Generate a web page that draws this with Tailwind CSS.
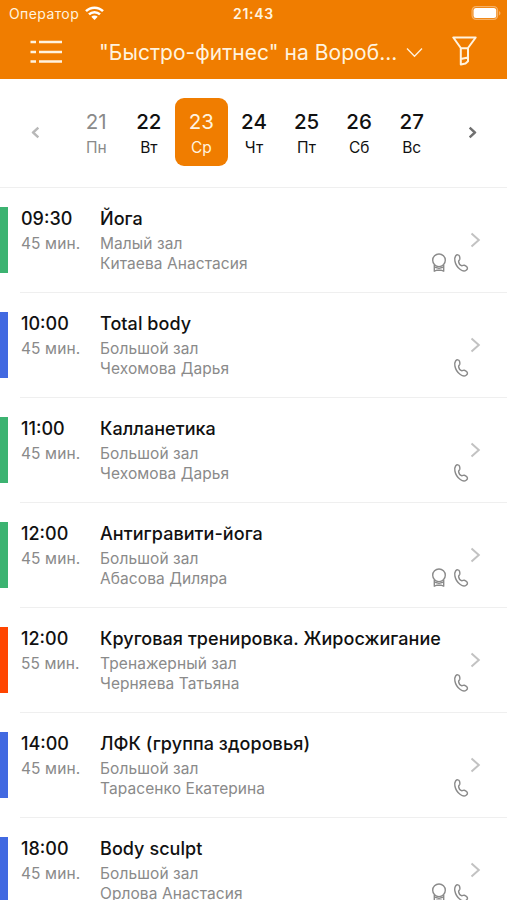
<!DOCTYPE html>
<html lang="ru">
<head>
<meta charset="utf-8">
<title>Расписание</title>
<script src="https://cdn.jsdelivr.net/npm/@tailwindcss/browser@4"></script>
</head>
<body class="bg-white">
<svg class="hidden">
  <symbol id="chevron" viewBox="0 0 10 16"><path d="M1 1.500 8.300 8 1 14.500" fill="none" stroke="currentColor" stroke-width="2"/></symbol>
  <symbol id="day-chevron" viewBox="0 0 10 16"><path d="M1.500 2 8 8 1.500 14" fill="none" stroke="currentColor" stroke-width="3"/></symbol>
  <symbol id="badge" viewBox="0 0 16 20"><g fill="none" stroke="currentColor" stroke-width="1.400" stroke-linejoin="round"><circle cx="8" cy="7.300" r="6.300"/><path d="M3.300 12V18.200L6 17.200H10L12.700 18.200V12M3.300 14 8 15.300 12.700 14"/></g></symbol>
  <symbol id="phone" viewBox="0 0 16 20"><path d="M2.600 3C3.800 1.300 6 1.500 6.500 3.200C6.900 4.500 7.100 5.300 6.800 6.200C6.400 7.300 5.500 7.600 5.600 8.700C5.800 10.300 7.200 12.200 8.600 12.700C9.700 13 10.200 12 11.300 12.200C12.400 12.500 13.300 13.200 14 14C14.900 15.100 14.400 16.400 13.200 17.200C11.500 18.400 9.300 17.900 7.300 16.500C4.600 14.600 2.500 11.200 1.900 8C1.500 6 1.700 4.300 2.600 3Z" fill="none" stroke="currentColor" stroke-width="1.400" stroke-linejoin="round"/></symbol>
</svg>
<div class="flex h-[900px] w-[507px] flex-col overflow-hidden bg-white font-['Inter',sans-serif] text-[#111]">
  <header class="h-[79px] shrink-0 bg-[#f07d00] text-[#fff3df]">
    <div class="grid h-[27px] grid-cols-3 items-center pl-[9px] pr-[9px] text-[14px] leading-[27px]">
      <div class="flex items-center gap-[6px]">
        <span class="w-[70px] whitespace-nowrap tracking-[0.4px]">Оператор</span>
        <svg class="-mt-px h-[14px] w-[19px] text-white" viewBox="0 0 19 14"><g fill="none" stroke="currentColor" stroke-width="2.500"><path d="M1 5.200a12 12 0 0 1 17 0"/><path d="M4 8.400a7.800 7.800 0 0 1 11 0"/></g><path d="M9.500 14 6.300 10.800a4.600 4.600 0 0 1 6.400 0Z" fill="currentColor"/></svg>
      </div>
      <span class="text-center font-semibold tracking-[0.7px]">21:43</span>
      <div class="-mr-[4px] -mt-px flex justify-end">
        <svg class="h-[14px] w-[31px]" viewBox="0 0 30 14"><rect x=".6" y=".6" width="25.500" height="12.800" rx="4" fill="none" stroke="#fff" stroke-opacity=".4" stroke-width="1.200"/><rect x="2" y="2" width="22.800" height="10" rx="2.500" fill="#fff"/><path d="M27.600 5v4.500c1.800-.8 1.800-3.700 0-4.500Z" fill="#fff" fill-opacity=".45"/></svg>
      </div>
    </div>
    <div class="flex h-[50px] items-center">
      <svg class="ml-[30px] h-[24px] w-[33px]" viewBox="0 0 33 24"><path d="M.5 2H6M9 2h23M.5 12H6M9 12h23M.5 21.500H6M9 21.500h23" stroke="currentColor" stroke-width="2.400"/></svg>
      <span class="ml-[36px] w-[300px] whitespace-nowrap pt-[2px] text-[21px] tracking-[0.030px]">"Быстро-фитнес" на Вороб...</span>
      <svg class="ml-[7px] h-[11px] w-[17px]" viewBox="0 0 17 11"><path d="M1 1.500 8.500 9.300 16 1.500" fill="none" stroke="currentColor" stroke-width="1.300"/></svg>
      <svg class="-mt-[2px] ml-[29px] h-[30px] w-[25px]" viewBox="0 0 25 30"><path d="M1.300 1.500h22.400L16 12v13.200L13.500 27.500 8.800 28.500V12ZM8.800 12.200H16M8.800 23 16 21.500" fill="none" stroke="currentColor" stroke-width="2" stroke-linejoin="round"/></svg>
    </div>
  </header>
  <nav class="flex h-[109px] shrink-0 items-center border-b border-[#efefef]">
    <svg class="-mt-[2px] ml-[31px] h-[13px] w-[9px] rotate-180 text-[#b8b8b8]" viewBox="0 0 10 16"><use href="#day-chevron"/></svg>
    <div id="days" class="-mt-[2px] ml-[30px] grid w-[368px] grid-cols-7"></div>
    <svg class="-mt-[2px] ml-[30px] h-[13px] w-[9px] text-[#707070]" viewBox="0 0 10 16"><use href="#day-chevron"/></svg>
  </nav>
  <main id="list"></main>
</div>
<script>
const days = [[21,'Пн'],[22,'Вт'],[23,'Ср'],[24,'Чт'],[25,'Пт'],[26,'Сб'],[27,'Вс']];
document.getElementById('days').innerHTML = days.map(([n,d]) => {
  const tone = n === 21 ? 'text-[#8a8a8a]' : n === 23 ? 'bg-[#f07d00] text-[#fff3df]' : '';
  const weight = n === 21 || n === 23 ? '' : 'font-medium';
  return `<div class="flex h-[68px] flex-col items-center rounded-[9px] pt-[11px] ${tone}"><span class="text-[20.500px] leading-[26px] ${weight}">${n}</span><span class="mt-[3px] text-[15.500px] leading-[20px]">${d}</span></div>`;
}).join('');
const classes = [
  ['09:30',45,'Йога','Малый зал','Китаева Анастасия','bg-[#3cb371]',true],
  ['10:00',45,'Total body','Большой зал','Чехомова Дарья','bg-[#4169e1]',false],
  ['11:00',45,'Калланетика','Большой зал','Чехомова Дарья','bg-[#3cb371]',false],
  ['12:00',45,'Антигравити-йога','Большой зал','Абасова Диляра','bg-[#3cb371]',true],
  ['12:00',55,'Круговая тренировка. Жиросжигание','Тренажерный зал','Черняева Татьяна','bg-[#ff4500]',false],
  ['14:00',45,'ЛФК (группа здоровья)','Большой зал','Тарасенко Екатерина','bg-[#4169e1]',false],
  ['18:00',45,'Body sculpt','Большой зал','Орлова Анастасия','bg-[#4169e1]',true],
];
document.getElementById('list').innerHTML = classes.map(([t,m,name,hall,coach,bar,badge]) => `
<article class="flex h-[105px] pt-[19px]">
  <div class="h-[66px] w-[8px] shrink-0 ${bar}"></div>
  <div class="ml-[12px] flex h-[86px] min-w-0 flex-1 border-b border-[#efefef]">
    <div class="w-[80px] shrink-0 pl-px pt-px">
      <div class="text-[18px] font-medium leading-[22px]">${t}</div>
      <div class="mt-[4px] text-[15.5px] leading-[20px] tracking-[0.1px] text-[#8a8a8a]">${m} мин.</div>
    </div>
    <div class="min-w-0 flex-1 whitespace-nowrap pt-px">
      <div class="text-[18px] font-medium leading-[22px] tracking-[0.06px]">${name}</div>
      <div class="mt-[4px] text-[15.5px] leading-[20px] tracking-[0.08px] text-[#8a8a8a]">${hall}<br>${coach}</div>
    </div>
    <div class="flex w-[82px] shrink-0 flex-col pt-[25px] text-[#8a8a8a]">
      <svg class="ml-[45px] h-[16px] w-[11px] text-[#c2c2c2]" viewBox="0 0 10 16"><use href="#chevron"/></svg>
      <div class="mt-[5px] flex gap-[6px] pl-[6px]">
        <svg class="h-[20px] w-[16px] ${badge ? '' : 'invisible'}"><use href="#badge"/></svg>
        <svg class="h-[20px] w-[16px]"><use href="#phone"/></svg>
      </div>
    </div>
  </div>
</article>`).join('');
</script>
</body>
</html>
